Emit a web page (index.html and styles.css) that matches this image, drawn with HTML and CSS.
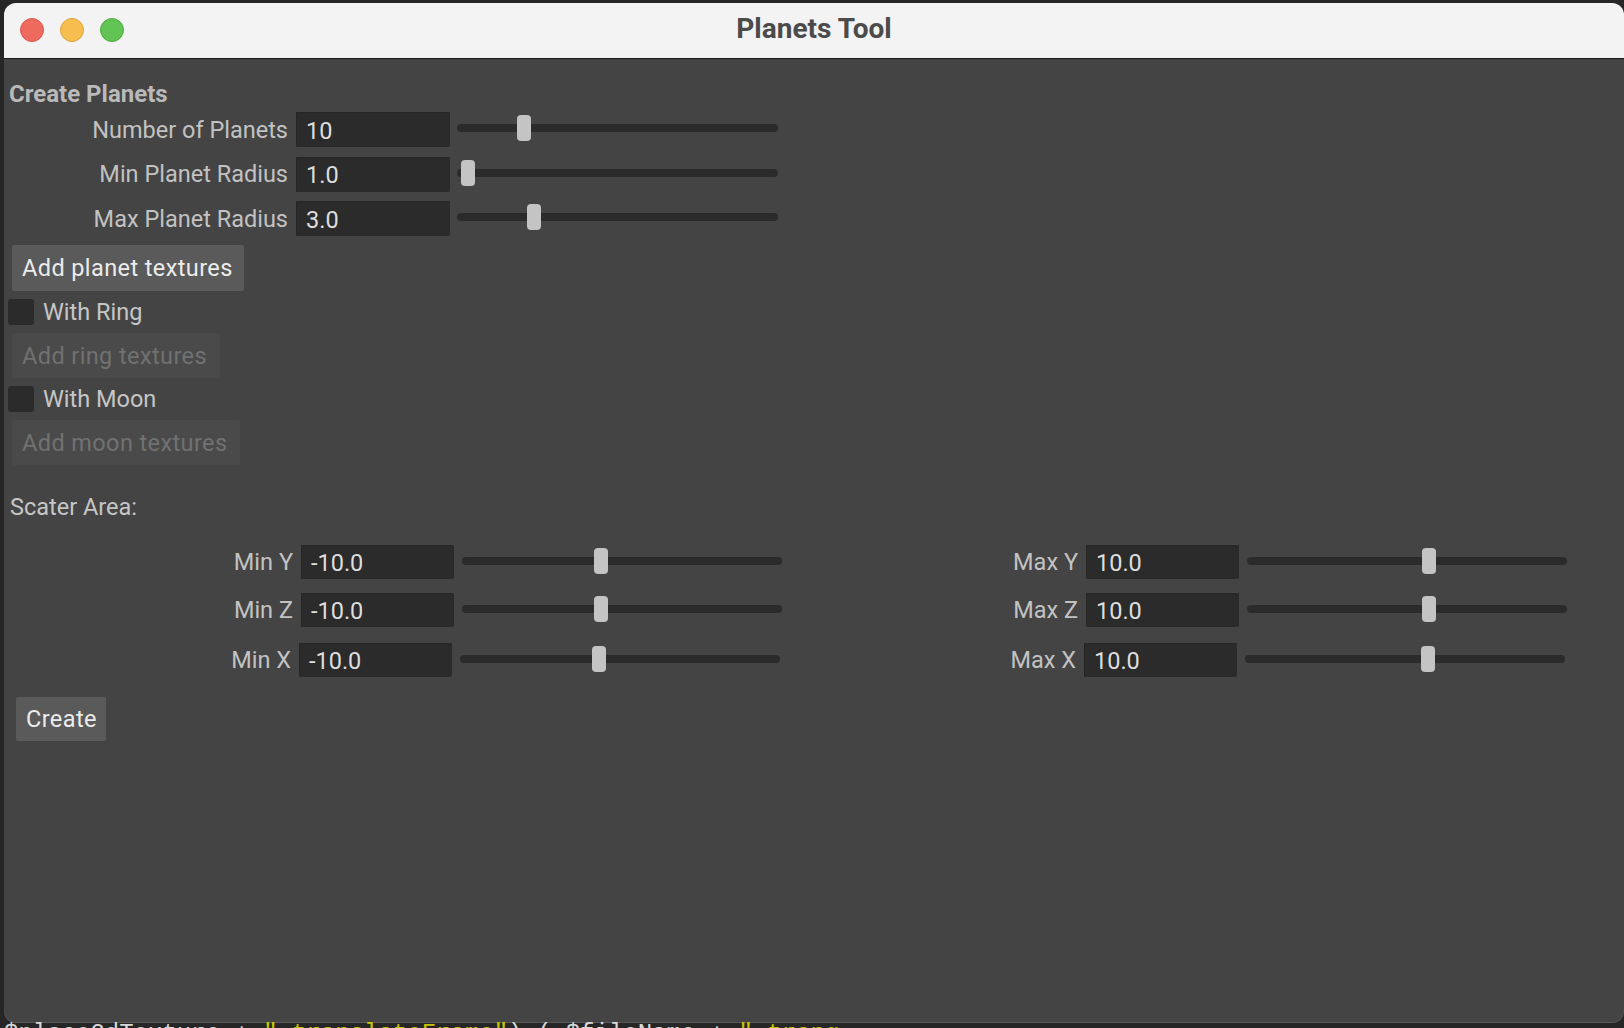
FILE: index.html
```html
<!DOCTYPE html>
<html>
<head>
<meta charset="utf-8">
<title>Planets Tool</title>
<link rel="stylesheet" href="styles.css">
</head>
<body>
<div class="desktop">
  <div class="window">
    <div class="titlebar">
      <div class="lights">
        <span class="light red"></span>
        <span class="light yellow"></span>
        <span class="light green"></span>
      </div>
      <div class="title">Planets Tool</div>
    </div>
    <div class="content">
      <div class="section-title">Create Planets</div>
      <div class="form">
        <div class="row">
          <div class="label">Number of Planets</div>
          <div class="field">10</div>
          <div class="slider"><div class="track"><div class="thumb" style="left:60px"></div></div></div>
        </div>
        <div class="row">
          <div class="label">Min Planet Radius</div>
          <div class="field">1.0</div>
          <div class="slider"><div class="track"><div class="thumb" style="left:4px"></div></div></div>
        </div>
        <div class="row">
          <div class="label">Max Planet Radius</div>
          <div class="field">3.0</div>
          <div class="slider"><div class="track"><div class="thumb" style="left:70px"></div></div></div>
        </div>
      </div>
      <div class="btn btn-planet">Add planet textures</div>
      <div class="check"><span class="box"></span><span class="check-label">With Ring</span></div>
      <div class="btn btn-ring disabled">Add ring textures</div>
      <div class="check"><span class="box"></span><span class="check-label">With Moon</span></div>
      <div class="btn btn-moon disabled">Add moon textures</div>

      <div class="scatter-title">Scater Area:</div>
      <div class="scatter">
        <div class="srow">
          <div class="label">Min Y</div>
          <div class="field">-10.0</div>
          <div class="slider"><div class="track"><div class="thumb" style="left:132px"></div></div></div>
        </div>
        <div class="srow">
          <div class="label">Max Y</div>
          <div class="field">10.0</div>
          <div class="slider"><div class="track"><div class="thumb" style="left:175px"></div></div></div>
        </div>
        <div class="srow">
          <div class="label">Min Z</div>
          <div class="field">-10.0</div>
          <div class="slider"><div class="track"><div class="thumb" style="left:132px"></div></div></div>
        </div>
        <div class="srow">
          <div class="label">Max Z</div>
          <div class="field">10.0</div>
          <div class="slider"><div class="track"><div class="thumb" style="left:175px"></div></div></div>
        </div>
        <div class="srow shift">
          <div class="label">Min X</div>
          <div class="field">-10.0</div>
          <div class="slider"><div class="track"><div class="thumb" style="left:132px"></div></div></div>
        </div>
        <div class="srow shift">
          <div class="label">Max X</div>
          <div class="field">10.0</div>
          <div class="slider"><div class="track"><div class="thumb" style="left:176px"></div></div></div>
        </div>
      </div>
      <div class="btn btn-create">Create</div>
    </div>
  </div>
  <div class="code">$place2dTexture + <span class="str">".translateFrame"</span>) ( $fileName + <span class="str">".trang</span></div>
</div>
</body>
</html>
```

FILE: styles.css
```css
html, body {
  margin: 0;
  padding: 0;
}
body {
  background: #262626;
  width: 1624px;
  height: 1028px;
  overflow: hidden;
  font-family: Roboto, "Liberation Sans", sans-serif;
}
.desktop {
  display: flex;
  flex-direction: column;
  padding: 3px 0 0 4px;
}
.window {
  width: 1620px;
  height: 1020px;
  border-radius: 12px;
  overflow: hidden;
  background: #444444;
  display: flex;
  flex-direction: column;
  box-shadow: inset 0 -1px 0 #5a5a5a;
}
.titlebar {
  height: 55px;
  flex: none;
  background: #f3f3f3;
  border-bottom: 1px solid #1c1c1c;
  display: flex;
  align-items: center;
  justify-content: center;
  position: relative;
}
.lights {
  position: absolute;
  left: 16px;
  top: 15px;
  display: flex;
  gap: 16px;
}
.light {
  width: 24px;
  height: 24px;
  border-radius: 50%;
  box-sizing: border-box;
}
.red { background: #ee6a5e; border: 1px solid #d65a4f; }
.yellow { background: #f6be4f; border: 1px solid #dba43f; }
.green { background: #61c454; border: 1px solid #4fab43; }
.title {
  font-weight: 700;
  font-size: 28px;
  color: #4b4b4b;
  padding-bottom: 4px;
}
.content {
  padding: 22px 0 0 4px;
  display: flex;
  flex-direction: column;
  align-items: flex-start;
}
.section-title {
  font-weight: 700;
  font-size: 24px;
  line-height: 27px;
  color: #b9b9b9;
  margin-left: 1px;
}
.form {
  margin-top: 4px;
  display: flex;
  flex-direction: column;
  gap: 9.5px;
}
.row {
  display: grid;
  grid-template-columns: 280px 154px 320px;
  column-gap: 8px;
  height: 35px;
  align-items: center;
}
.row .slider { margin-left: -1px; }
.label {
  text-align: right;
  font-size: 23.5px;
  color: #c2c2c2;
  white-space: nowrap;
}
.field {
  height: 100%;
  box-sizing: border-box;
  background: #2b2b2b;
  border-radius: 2px;
  box-shadow: inset 0 1px 0 #262626, inset 1px 0 0 #262626;
  color: #dedede;
  font-size: 23.5px;
  padding-left: 10px;
  display: flex;
  align-items: center;
  padding-top: 2px;
}
.slider {
  display: flex;
  align-items: center;
  height: 100%;
}
.track {
  position: relative;
  width: 100%;
  height: 8px;
  border-radius: 4px;
  background: #2b2b2b;
  margin-bottom: 3px;
}
.thumb {
  position: absolute;
  top: -9px;
  width: 14px;
  height: 26px;
  border-radius: 4px;
  background: #c4c4c4;
}
.btn {
  height: 45px;
  box-sizing: border-box;
  display: flex;
  align-items: center;
  background: #5a5a5a;
  color: #ececec;
  font-size: 23.5px;
  letter-spacing: 0.4px;
  padding: 0 10px;
  margin-left: 4px;
  border-radius: 2px;
  white-space: nowrap;
}
.btn.disabled {
  background: #4a4a4a;
  color: #717171;
}
.btn-planet { margin-top: 9px; width: 232px; height: 46px; }
.btn-ring { width: 208px; }
.btn-moon { width: 228px; }
.btn-create { margin-top: 20px; margin-left: 8px; width: 90px; height: 44px; }
.check {
  display: flex;
  align-items: center;
  height: 26px;
  margin: 8px 0;
  gap: 9px;
}
.box {
  width: 26px;
  height: 26px;
  border-radius: 3px;
  background: #2b2b2b;
}
.check-label {
  font-size: 23.5px;
  color: #c6c6c6;
}
.scatter-title {
  margin-top: 28px;
  margin-left: 2px;
  font-size: 23.5px;
  line-height: 28px;
  color: #c6c6c6;
}
.scatter {
  margin-top: 24px;
  display: grid;
  grid-template-columns: 785px 785px;
  row-gap: 14px;
}
.srow {
  display: grid;
  grid-template-columns: 285px 153px 320px;
  column-gap: 8px;
  height: 34px;
  align-items: center;
}
.srow.shift {
  margin-top: 2px;
  margin-left: -2px;
}
.code {
  margin-top: -2px;
  font-family: "Liberation Mono", monospace;
  font-size: 24px;
  line-height: 26px;
  color: #d8d8d8;
  white-space: nowrap;
}
.code .str { color: #c8c400; }
```
